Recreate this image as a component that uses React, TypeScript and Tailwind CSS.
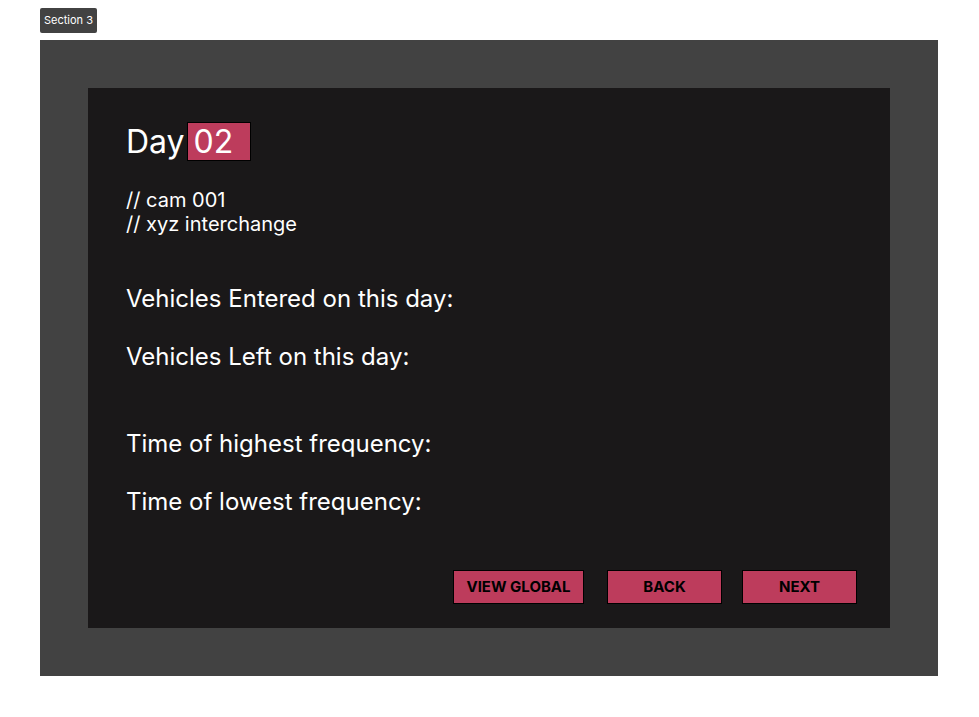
import React from 'react';

const stats = [
    'Vehicles Entered on this day:',
    'Vehicles Left on this day:',
];

const freq = [
    'Time of highest frequency:',
    'Time of lowest frequency:',
];

const DayView: React.FC = () => {
    return (
        <div className="min-h-[717px] bg-white pt-2 pl-10" style={{ fontFamily: 'Inter, "Noto Sans", sans-serif' }}>
            {/* Section label */}
            <div className="flex h-[25px] w-[57px] items-center justify-center rounded-[2px] bg-[#424242] text-[11px] text-white">
                Section 3
            </div>

            {/* Frame */}
            <div className="mt-[7px] w-[898px] h-[636px] bg-[#424242] p-12">
                <div className="flex h-full flex-col bg-[#1a1819] pl-[38px] pr-[33px] pt-[34px] text-white">
                    <div className="flex items-center">
                        <span className="text-[32px] leading-none">Day</span>
                        <span className="ml-[2px] flex h-[39px] w-[64px] shrink-0 items-center border border-black bg-[#bd3c5c] pl-[6px] text-[32px] leading-none">
                            02
                        </span>
                    </div>

                    <div className="mt-[27px] text-[20px] leading-[24px]">
                        <p>// cam 001</p>
                        <p>// xyz interchange</p>
                    </div>

                    <div className="mt-[48px] flex flex-col gap-[29px]">
                        {stats.map((s) => (
                            <p key={s} className="text-[24px] leading-[29px]">{s}</p>
                        ))}
                    </div>

                    <div className="mt-[58px] flex flex-col gap-[29px]">
                        {freq.map((s) => (
                            <p key={s} className="text-[24px] leading-[29px]">{s}</p>
                        ))}
                    </div>

                    {/* Buttons */}
                    <div className="mt-[54px] flex justify-end">
                        <button className="h-[34px] w-[131px] border border-black bg-[#bd3c5c] text-[15px] font-bold text-black">
                            VIEW GLOBAL
                        </button>
                        <button className="ml-[23px] h-[34px] w-[115px] border border-black bg-[#bd3c5c] text-[15px] font-bold text-black">
                            BACK
                        </button>
                        <button className="ml-[20px] h-[34px] w-[115px] border border-black bg-[#bd3c5c] text-[15px] font-bold text-black">
                            NEXT
                        </button>
                    </div>
                </div>
            </div>
        </div>
    );
};

export default function App() {
    return <DayView />;
}
